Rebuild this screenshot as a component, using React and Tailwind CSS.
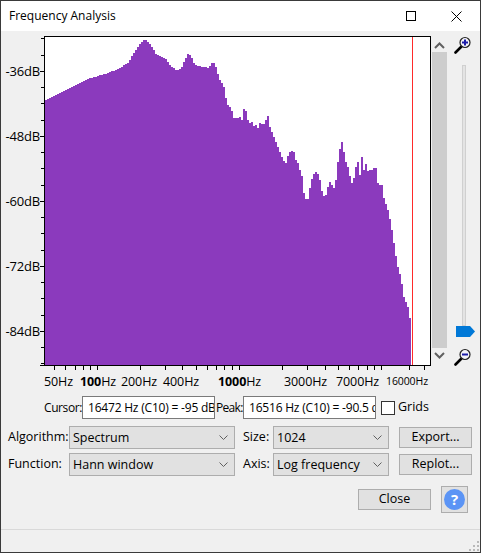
import React from "react";

const pts = [[45,100],[60,92],[73,86],[90,78],[107,73],[117,69],[127,63],[133,53],[138,45],[144,39],[150,45],[155,54],[165,59],[170,66],[175,70],[180,69],[183,62],[187,54],[190,56],[193,63],[197,66],[203,67],[208,68],[212,61],[215,67],[218,78],[220,81],[223,87],[225,98],[227,105],[230,108],[233,118],[237,118],[238,115],[241,120],[243,109],[246,112],[247,120],[248,124],[251,122],[253,126],[254,123],[257,128],[259,123],[263,124],[267,116],[269,127],[273,137],[277,147],[282,160],[285,163],[288,153],[292,150],[294,153],[296,167],[297,163],[300,173],[302,178],[303,193],[305,199],[307,199],[309,188],[312,175],[315,172],[318,175],[320,185],[322,197],[325,195],[327,187],[328,180],[331,185],[332,179],[333,188],[335,180],[338,153],[341,142],[343,152],[344,160],[347,167],[348,172],[351,183],[353,178],[355,167],[357,162],[358,175],[360,175],[361,157],[363,170],[365,164],[368,175],[370,165],[372,175],[374,160],[377,183],[380,186],[382,184],[383,198],[387,210],[390,223],[393,243],[396,263],[400,277],[403,297],[407,307],[409,318],[411,343]];

function yAt(x) {
  for (let i = 0; i < pts.length - 1; i++) {
    const [a, b] = pts[i], [c, d] = pts[i + 1];
    if (x >= a && x <= c) return Math.round(b + ((d - b) * (x - a)) / (c - a));
  }
  return 365;
}
let spectrum = "M45 365";
for (let x = 45; x < 411; x += 1) {
  const y = yAt(x - ((x - 45) % 2 === 1 ? 1 : 0));
  spectrum += `L${x} ${y}L${x + 1} ${y}`;
}
spectrum += "L411 365Z";

const xTicks = [54,65,75,83,90,97,140,165,182,196,207,216,224,232,239,282,307,325,338,349,358,367,374,381,409,424];
const yTicks = [38,55,71,87,103,120,136,152,168,185,201,217,233,250,266,282,298,315,331,347,363];

function Plot() {
  return (
    <svg width="392" height="336" viewBox="40 36 392 336" shapeRendering="crispEdges" className="block shrink-0">
      <rect x="44" y="36" width="387" height="330" fill="#fff" />
      <path d={spectrum} fill="#8b3abd" />
      <rect x="412" y="37" width="1" height="328" fill="#ff2a2a" />
      <rect x="44" y="36" width="387" height="1" fill="#000" />
      <rect x="44" y="36" width="1" height="330" fill="#000" />
      <rect x="430" y="36" width="1" height="330" fill="#000" />
      <rect x="40" y="365" width="391" height="1" fill="#000" />
      {yTicks.map((y) => <rect key={y} x="41" y={y} width="3" height="1" fill="#000" />)}
      {[71,136,201,266,331].map((y) => <rect key={y} x="40" y={y} width="4" height="1" fill="#000" />)}
      {xTicks.map((x) => <rect key={x} x={x} y="366" width="1" height="4" fill="#000" />)}
    </svg>
  );
}

function Mag({ plus }) {
  return (
    <svg width="18" height="18" viewBox="0 0 18 18" className="block">
      <path d="M1.5 16.5L7 11" stroke="#000" strokeWidth="2.6" strokeLinecap="round" />
      <circle cx="11" cy="6.5" r="5" fill="#f4f4f8" stroke="#222" strokeWidth="1.2" />
      <rect x="8" y="5.5" width="6" height="2" fill="#1c1ca8" />
      {plus && <rect x="10" y="3.5" width="2" height="6" fill="#1c1ca8" />}
    </svg>
  );
}

function Chevron({ up, color = "#606060", w = 2 }) {
  return (
    <svg width="11" height="7" viewBox="0 0 11 7" className="block">
      <path d={up ? "M1 6L5.5 1.5L10 6" : "M1 1L5.5 5.5L10 1"} fill="none" stroke={color} strokeWidth={w} />
    </svg>
  );
}

function Select({ w, text }) {
  return (
    <div className={`${w} h-[23px] shrink-0 flex items-center justify-between bg-[#e1e1e1] border border-[#adadad] pl-[3px] pr-[6px] text-[12.5px] text-black`}>
      <span className="pt-[1px]">{text}</span>
      <svg width="9" height="5" viewBox="0 0 9 5" className="block">
        <path d="M0.5 0.5L4.5 4.5L8.5 0.5" fill="none" stroke="#606060" strokeWidth="1" />
      </svg>
    </div>
  );
}

function Btn({ w, h, text }) {
  return (
    <div className={`${w} ${h} shrink-0 flex items-center justify-center bg-[#e1e1e1] border border-[#adadad] text-[12.5px] text-black`}>
      {text}
    </div>
  );
}

function ReadOnly({ text }) {
  return (
    <div className="w-[133px] h-[23px] shrink-0 flex items-center overflow-hidden whitespace-nowrap bg-white border border-[#7a7a7a] pl-[5px] text-[12px] tracking-[-0.2px] text-black">
      <span>{text}</span>
    </div>
  );
}

const xLabels = [
  ["w-[36px]", "", "50Hz"],
  ["w-[41px]", "100", "Hz"],
  ["w-[42px]", "", "200Hz"],
  ["w-[55px]", "", "400Hz"],
  ["w-[66px]", "1000", "Hz"],
  ["w-[52px]", "", "3000Hz"],
  ["w-[50px]", "", "7000Hz"],
];

export default function App() {
  return (
    <div
      className="w-[481px] h-[553px] flex flex-col bg-[#f0f0f0] border border-[#3a3a3a] overflow-hidden text-black"
      style={{ fontFamily: '"Open Sans", "Noto Sans", sans-serif' }}
    >
      <div className="h-[30px] shrink-0 bg-white flex items-center justify-between">
        <span className="pl-[8px] text-[12px]">Frequency Analysis</span>
        <div className="flex items-center">
          <svg width="11" height="11" viewBox="0 0 11 11" className="block mr-[34px]" shapeRendering="crispEdges">
            <rect x="0.5" y="0.5" width="9" height="9" fill="none" stroke="#000" />
          </svg>
          <svg width="11" height="11" viewBox="0 0 11 11" className="block mr-[18px]">
            <path d="M0.5 0.5L10.5 10.5M10.5 0.5L0.5 10.5" stroke="#000" strokeWidth="1" />
          </svg>
        </div>
      </div>

      <div className="flex pt-[5px] h-[341px] shrink-0">
        <div className="w-[39px] shrink-0 flex flex-col items-end gap-[45px] pt-[25px] text-[13px] leading-5 tracking-[-0.2px]">
          <span>-36dB</span>
          <span>-48dB</span>
          <span>-60dB</span>
          <span>-72dB</span>
          <span>-84dB</span>
        </div>
        <Plot />
        <div className="w-[15px] h-[336px] shrink-0 flex flex-col items-center">
          <div className="h-[16px] flex items-center justify-center pt-[3px]"><Chevron up /></div>
          <div className="w-[15px] h-[296px] bg-[#cdcdcd]" />
          <div className="flex-1 flex items-center justify-center pb-[10px]"><Chevron /></div>
        </div>
        <div className="w-[33px] shrink-0 flex flex-col items-center pl-[1px]">
          <div className="h-[29px] flex items-start -ml-[3px]"><Mag plus /></div>
          <div className="w-[4px] h-[261px] bg-[#e4e4e4] border border-[#d0d0d0]" />
          <svg width="19" height="11" viewBox="0 0 19 11" className="block shrink-0 ml-[2px]">
            <path d="M0 0H14L19 5.5L14 11H0Z" fill="#0078d7" />
          </svg>
          <div className="mt-[11px] -ml-[3px]"><Mag /></div>
        </div>
      </div>

      <div className="h-[20px] shrink-0 flex items-center pl-[43px] text-[12.5px] tracking-[-0.1px] whitespace-nowrap">
        {xLabels.map(([w, b, r]) => (
          <span key={r + b} className={`${w} shrink-0`}>
            {b && <b className="font-bold">{b}</b>}{r}
          </span>
        ))}
        <span className="text-[10.5px]">16000Hz</span>
      </div>

      <div className="flex items-center h-[23px] mt-[4px] shrink-0 text-[12px] whitespace-nowrap">
        <span className="w-[81px] pl-[43px] shrink-0 tracking-[-0.4px]">Cursor:</span>
        <ReadOnly text="16472 Hz (C10) =  -95 dB" />
        <span className="w-[28px] pl-[1px] shrink-0 tracking-[-0.7px]">Peak:</span>
        <ReadOnly text="16516 Hz (C10) =  -90.5 dB" />
        <div className="w-[14px] h-[14px] ml-[5px] mr-[3px] shrink-0 bg-white border border-[#333]" />
        <span className="text-[12.5px]">Grids</span>
      </div>

      <div className="flex items-center h-[23px] mt-[7px] shrink-0 text-[12.5px]">
        <span className="w-[68px] pl-[7px] shrink-0">Algorithm:</span>
        <Select w="w-[166px]" text="Spectrum" />
        <span className="w-[38px] pl-[8px] shrink-0">Size:</span>
        <Select w="w-[116px]" text="1024" />
        <div className="ml-[10px]"><Btn w="w-[73px]" h="h-[21px]" text="Export..." /></div>
      </div>

      <div className="flex items-center h-[23px] mt-[4px] shrink-0 text-[12.5px]">
        <span className="w-[68px] pl-[7px] shrink-0">Function:</span>
        <Select w="w-[166px]" text="Hann window" />
        <span className="w-[38px] pl-[8px] shrink-0">Axis:</span>
        <Select w="w-[116px]" text="Log frequency" />
        <div className="ml-[10px]"><Btn w="w-[73px]" h="h-[21px]" text="Replot..." /></div>
      </div>

      <div className="flex items-center justify-end h-[27px] mt-[10px] pr-[12px] gap-[10px] shrink-0">
        <Btn w="w-[73px]" h="h-[21px]" text="Close" />
        <div className="w-[27px] h-[27px] flex items-center justify-center bg-[#e1e1e1] border border-[#adadad]">
          <div className="w-[21px] h-[21px] rounded-full bg-[#5b94f5] flex items-center justify-center text-white font-bold text-[15px] leading-none">?</div>
        </div>
      </div>

      <div className="mt-[16px] h-px bg-[#d9d9d9] shrink-0" />
      <div className="flex-1 flex items-end justify-end pr-[1px] pb-[1px]">
        <svg width="10" height="10" viewBox="0 0 10 10" className="block" shapeRendering="crispEdges">
          {[[8,0],[4,4],[8,4],[0,8],[4,8],[8,8]].map(([x, y]) => (
            <rect key={x + "-" + y} x={x} y={y} width="2" height="2" fill="#b8b8b8" />
          ))}
        </svg>
      </div>
    </div>
  );
}
